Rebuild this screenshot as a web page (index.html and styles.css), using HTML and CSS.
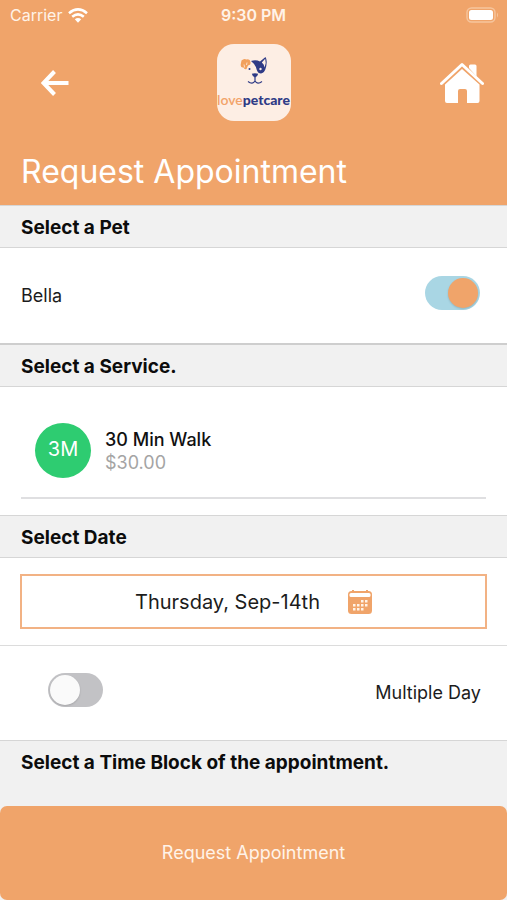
FILE: index.html
```html
<!DOCTYPE html>
<html lang="en">
<head>
<meta charset="utf-8">
<meta name="viewport" content="width=device-width, initial-scale=1">
<title>Request Appointment</title>
<link rel="stylesheet" href="styles.css">
</head>
<body>
<div class="app">
  <header class="top">
    <div class="status">
      <div class="carrier">Carrier
        <svg width="20" height="15" viewBox="0 0 20 15" aria-hidden="true"><g fill="none" stroke="#fff" stroke-width="2.6"><path d="M1 5.2Q10-2.4 19 5.2"/><path d="M4.2 8.8Q10 4 15.8 8.8"/></g><path fill="#fff" d="M6.8 11.3Q10 8.6 13.2 11.3L10 14.8Z"/></svg>
      </div>
      <div class="clock">9:30 PM</div>
      <div class="power">
        <svg width="33" height="16" viewBox="0 0 33 16" aria-hidden="true"><rect x="1" y="1" width="28" height="14" rx="4.5" fill="none" stroke="#f6c59d" stroke-width="1.4"/><rect x="3" y="3" width="24" height="10" rx="2.5" fill="#fff"/><path d="M31 5.5Q33 8 31 10.5Z" fill="#f6c59d"/></svg>
      </div>
    </div>
    <nav class="nav">
      <button class="icon-button back" type="button" aria-label="Back">
        <svg width="28" height="26" viewBox="0 0 28 26" aria-hidden="true"><path d="M13.5 1.5L2.5 13L13.5 24.500M2.500 13H27.500" fill="none" stroke="#fff" stroke-width="4"/></svg>
      </button>
      <div class="logo">
        <svg width="30" height="30" viewBox="0 0 30 30" aria-hidden="true">
          <path fill="#f2a05c" d="M2.500 4.500Q5 2 7.500 3.500Q11 2.500 11.500 6Q12 9 9 9.500L7.500 13Q5.500 14 4.500 11.500Q1.500 12 1.700 8.500Z"/>
          <path d="M5 8.500L5.600 11.500M8 6.500L7.500 9" stroke="#fdeee4" stroke-width=".8"/>
          <path fill="#2f3b86" d="M12 5Q17 3.500 21 5.500L26.500 1Q29 5 26.300 13.500Q25 17 22 17.500Q19 17.500 17.800 14Q17 9 12 5Z"/>
          <path fill="#fdeee4" d="M22.800 6.400L26.200 2.800Q27.600 7 25.600 11.500Q25 7.800 22.800 6.400Z"/>
          <circle cx="21.500" cy="13" r="1.200" fill="#fdeee4"/>
          <circle cx="10.500" cy="13" r="1" fill="#2f3b86"/>
          <path fill="#2f3b86" d="M12.800 17.800Q16 16.600 19.200 17.800Q18.500 21 16 21.600Q13.500 21 12.800 17.800Z"/>
          <path d="M16 21V25M9 25.500Q13.500 29 16 25Q18.500 29 23 25.500" fill="none" stroke="#2f3b86" stroke-width="1.200"/>
        </svg>
        <div class="brand">love<b>petcare</b></div>
      </div>
      <button class="icon-button home" type="button" aria-label="Home">
        <svg width="44" height="42" viewBox="0 0 44 42" aria-hidden="true"><path d="M1.500 21.500L22 2.500L42.500 21.500" fill="none" stroke="#fff" stroke-width="3" stroke-linecap="round" stroke-linejoin="round"/><path fill="#fff" d="M29 6V4Q29 2.500 30.500 2.500H35Q36.500 2.500 36.500 4V14.500ZM5 22.500L22 7L39.500 22.500V39Q39.500 41 37.500 41H27V29Q27 27 25 27H20Q18 27 18 29V41H7Q5 41 5 39Z"/></svg>
      </button>
    </nav>
    <h1>Request Appointment</h1>
  </header>
  <main>
    <h2>Select a Pet</h2>
    <div class="row pet">
      <label for="bella">Bella</label>
      <input class="switch" id="bella" type="checkbox" role="switch" checked>
    </div>
    <h2 class="heavy">Select a Service.</h2>
    <div class="services">
      <div class="service">
        <div class="avatar">3M</div>
        <div>
          <div class="name">30 Min Walk</div>
          <div class="price">$30.00</div>
        </div>
      </div>
    </div>
    <h2>Select Date</h2>
    <div class="date-wrap">
      <button class="date" type="button">
        <span>Thursday, Sep-14th</span>
        <svg width="24" height="24" viewBox="0 0 24 24" aria-hidden="true"><rect x="0" y="1" width="24" height="23" rx="3.500" fill="#f0a46a"/><path d="M5 0V3M19 0V3" stroke="#f0a46a" stroke-width="2"/><rect x="1.500" y="3" width="21" height="4" rx="1.500" fill="#fff"/><g fill="#fff3e8"><path d="M13 10h2.500v2.500H13zM17 10h2.500v2.500H17zM5 14h2.500v2.500H5zM9 14h2.500v2.500H9zM13 14h2.500v2.500H13zM17 14h2.500v2.500H17zM5 18h2.500v2.500H5zM9 18h2.500v2.500H9zM13 18h2.500v2.500H13z"/></g></svg>
      </button>
    </div>
    <div class="row multi">
      <input class="switch" id="multi" type="checkbox" role="switch">
      <label for="multi">Multiple Day</label>
    </div>
    <h2 class="last">Select a Time Block of the appointment.</h2>
  </main>
  <div class="footer"><button class="submit" type="button">Request Appointment</button></div>
</div>
</body>
</html>
```
FILE: styles.css
```css
* { box-sizing: border-box; }
body { margin: 0; background: #f1f1f1; color: #1c1c1c; font-family: Inter, "Liberation Sans", sans-serif; font-size: 18px; line-height: 24px; }
button { font: inherit; border: 0; padding: 0; cursor: pointer; }
svg { display: block; }
.app { min-height: 100vh; display: flex; flex-direction: column; }
main { flex: 1; }

.top { background: #f0a46a; color: #fff; }
.status { display: grid; grid-template-columns: 1fr auto 1fr; align-items: center; height: 30px; padding: 0 8px; font-size: 16px; color: #fff3e8; }
.carrier { display: flex; align-items: center; gap: 6px; padding-left: 2px; }
.clock { font-weight: 600; }
.power { display: flex; justify-content: flex-end; }
.nav { display: grid; grid-template-columns: 1fr auto 1fr; align-items: center; padding: 14px 22px 0; }
.icon-button { display: flex; align-items: center; justify-content: center; width: 46px; height: 46px; background: none; }
.back { margin-left: 10px; }
.home { justify-self: end; }
.logo { display: flex; flex-direction: column; align-items: center; width: 74px; height: 77px; padding-top: 12px; border-radius: 17px; background: #fdeee4; overflow: hidden; }
.brand { margin-top: 4px; font: 600 14px/20px Lato, sans-serif; color: #f2a46a; }
.brand b { font-weight: 900; color: #2f3b86; }
h1 { margin: 0; padding: 31px 21px 13px; font-size: 32px; line-height: 40px; font-weight: 400; }

h2 { margin: 0; padding: 10px 21px 7px; border-top: 1px solid #d6d6d6; border-bottom: 1px solid #d6d6d6; background: #f1f1f1; color: #0c0c0c; font-size: 19px; line-height: 24px; font-weight: 700; }
h2.heavy { border-top: 2px solid #cecece; }
h2.last { border-bottom: 0; }

.row { display: flex; align-items: center; justify-content: space-between; height: 95px; background: #fff; }
.pet { padding: 0 27px 0 21px; }
.multi { padding: 0 26px 0 48px; border-top: 1px solid #dcdcdc; }
.switch { appearance: none; display: flex; align-items: center; width: 55px; height: 34px; margin: 0 0 6px; padding: 2px; border-radius: 17px; background: #c2c2c5; cursor: pointer; }
.switch::before { content: ""; width: 30px; height: 30px; border-radius: 50%; background: #fafafa; box-shadow: 0 1px 2px rgba(0, 0, 0, .15); }
.switch:checked { justify-content: flex-end; background: #a9d6e4; }
.switch:checked::before { background: #f0a46a; }

.services { padding: 36px 21px 16px; background: #fff; }
.service { display: flex; align-items: flex-start; gap: 14px; padding: 0 14px 19px; border-bottom: 2px solid #dfdfe1; }
.avatar { width: 56px; height: 55px; border-radius: 50%; background: #2ecc71; color: #fff; font-size: 20px; line-height: 53px; text-align: center; }
.name { padding-top: 5px; color: #111; font-weight: 500; line-height: 23px; }
.price { color: #a4a4a4; line-height: 23px; }

.date-wrap { padding: 16px 20px; background: #fff; }
.date { display: flex; align-items: center; justify-content: center; gap: 28px; width: 100%; height: 55px; border: 2px solid #f2b284; background: #fff; color: #1c1c1c; font-size: 20px; }

.submit { display: block; width: 100%; height: 94px; border-radius: 7px; background: #f0a46a; color: #fff3e8; font-size: 18px; }
```
